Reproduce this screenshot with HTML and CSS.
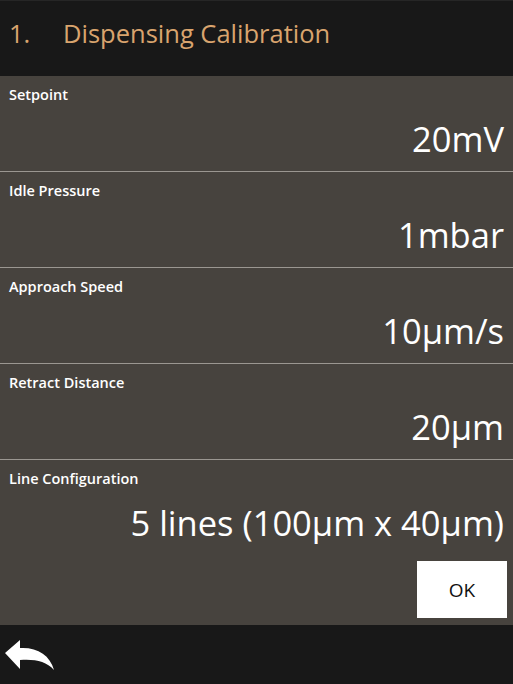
FILE: index.html
```html
<!DOCTYPE html>
<html lang="en">
<head>
    <meta charset="UTF-8">
    <meta name="viewport" content="width=device-width, initial-scale=1.0">
    <title>Dispensing Calibration</title>
    <link rel="stylesheet" href="styles.css">
</head>
<body>
    <div class="screen">
        <header class="title-bar">
            <span class="step">1.</span>
            <span class="title">Dispensing Calibration</span>
        </header>
        <div class="settings">
            <div class="row">
                <div class="label">Setpoint</div>
                <div class="value">20mV</div>
            </div>
            <div class="row">
                <div class="label">Idle Pressure</div>
                <div class="value">1mbar</div>
            </div>
            <div class="row">
                <div class="label">Approach Speed</div>
                <div class="value">10µm/s</div>
            </div>
            <div class="row">
                <div class="label">Retract Distance</div>
                <div class="value">20µm</div>
            </div>
            <div class="row last">
                <div class="label">Line Configuration</div>
                <div class="value">5 lines (100µm x 40µm)</div>
                <div class="actions">
                    <button type="button" class="ok-button">OK</button>
                </div>
            </div>
        </div>
        <footer class="bottom-bar">
            <svg class="back-icon" width="50" height="32" viewBox="0 0 50 32">
                <path d="M0 13 L15 0 L15 8 C32 7 45 15 49 30 C41 21 30 19 15 20 L15 29 Z" fill="#fff"/>
            </svg>
        </footer>
    </div>
</body>
</html>
```

FILE: styles.css
```css
body {
    margin: 0;
    padding: 0;
    background-color: #181818;
    font-family: "Open Sans", "Noto Sans", sans-serif;
    color: #fff;
}
.screen {
    width: 513px;
    height: 684px;
    display: flex;
    flex-direction: column;
}
.title-bar {
    height: 76px;
    box-sizing: border-box;
    border-top: 1px solid #262626;
    display: flex;
    align-items: center;
    padding: 0 0 11px 9px;
    color: #d9a46e;
    font-size: 25.5px;
}
.step {
    width: 54px;
}
.settings {
    background-color: #47433e;
    display: flex;
    flex-direction: column;
}
.row {
    height: 96px;
    box-sizing: border-box;
    border-bottom: 1px solid #9b9791;
    padding: 10px 9px 0 9px;
    display: flex;
    flex-direction: column;
}
.row.last {
    height: 165px;
    border-bottom: none;
}
.label {
    font-size: 14.5px;
    font-weight: 600;
    line-height: 18px;
}
.value {
    text-align: right;
    font-size: 34.5px;
    line-height: 40px;
    margin-top: 15px;
}
.actions {
    display: flex;
    justify-content: flex-end;
    margin-top: 18px;
    margin-right: -3px;
}
.ok-button {
    width: 90px;
    height: 57px;
    border: none;
    background: #fff;
    color: #111;
    font-family: "Open Sans", "Noto Sans", sans-serif;
    font-size: 19px;
}
.bottom-bar {
    flex: 1;
    padding: 15px 0 0 5px;
}
.back-icon {
    display: block;
}
```
